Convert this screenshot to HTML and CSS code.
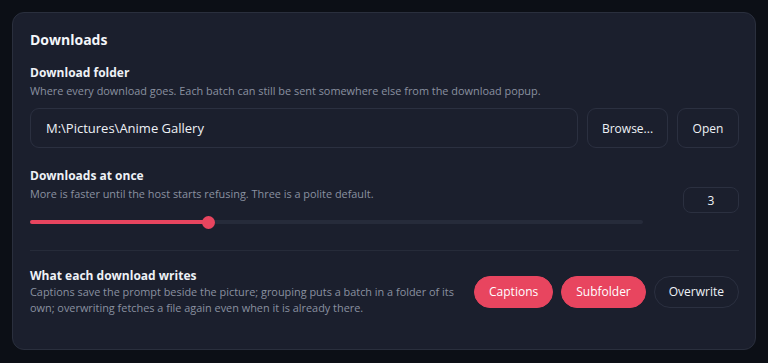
FILE: index.html
```html
<!DOCTYPE html>
<html>
<head>
<meta charset="utf-8">
<link rel="stylesheet" href="styles.css">
</head>
<body>
<section class="card">
  <h2 class="title">Downloads</h2>

  <div class="field">
    <div class="label">Download folder</div>
    <div class="desc">Where every download goes. Each batch can still be sent somewhere else from the download popup.</div>
    <div class="folder-row">
      <div class="input">M:\Pictures\Anime Gallery</div>
      <button class="btn">Browse...</button>
      <button class="btn">Open</button>
    </div>
  </div>

  <div class="field at-once">
    <div class="at-once-text">
      <div class="label">Downloads at once</div>
      <div class="desc">More is faster until the host starts refusing. Three is a polite default.</div>
      <div class="slider">
        <div class="fill" style="width: 178px"></div>
        <div class="thumb" style="left: 178px"></div>
      </div>
    </div>
    <div class="num">3</div>
  </div>

  <div class="divider"></div>

  <div class="writes">
    <div class="writes-text">
      <div class="label">What each download writes</div>
      <div class="desc">Captions save the prompt beside the picture; grouping puts a batch in a folder of its own; overwriting fetches a file again even when it is already there.</div>
    </div>
    <div class="pills">
      <button class="pill on">Captions</button>
      <button class="pill on">Subfolder</button>
      <button class="pill">Overwrite</button>
    </div>
  </div>
</section>
</body>
</html>
```

FILE: styles.css
```css
* { box-sizing: border-box; }
html, body { margin: 0; padding: 0; }
body {
  background: #0c0f16;
  font-family: "Open Sans", "Noto Sans", sans-serif;
  color: #eef1f6;
  padding: 12px 12px 0 12px;
  width: 768px;
  height: 363px;
  overflow: hidden;
}
.card {
  width: 744px;
  height: 338px;
  background: #1b1f2d;
  border: 1px solid #2a2f3d;
  border-radius: 12px;
  padding: 17px 16px 0 17px;
}
.title {
  margin: 0;
  font-size: 14px;
  font-weight: 700;
  line-height: 20px;
  color: #f4f6fa;
}
.field { margin-top: 14px; }
.label {
  font-size: 12px;
  font-weight: 700;
  line-height: 17px;
  color: #eef1f6;
}
.desc {
  font-size: 10.9px;
  line-height: 16px;
  color: #8a91a0;
  margin-top: 2px;
}
.folder-row {
  display: flex;
  gap: 9px;
  margin-top: 9px;
}
.input {
  flex: 1;
  height: 40px;
  border: 1px solid #2b3040;
  border-radius: 9px;
  background: #1b1f2d;
  padding: 0 15px;
  display: flex;
  align-items: center;
  font-size: 13px;
  color: #eef1f6;
}
.btn {
  height: 40px;
  background: #1b1f2d;
  border: 1px solid #2b3040;
  border-radius: 9px;
  color: #eef1f6;
  font-family: inherit;
  font-size: 12px;
  padding: 0 12px;
}
.btn:nth-of-type(1) { width: 81px; }
.btn:nth-of-type(2) { width: 62px; }
.at-once {
  display: flex;
  align-items: flex-start;
  gap: 40px;
  margin-top: 19px;
}
.at-once-text { flex: 1; }
.slider {
  position: relative;
  height: 4px;
  background: #262b3a;
  border-radius: 2px;
  margin-top: 18px;
}
.fill {
  position: absolute;
  left: 0; top: 0; bottom: 0;
  background: #e8455f;
  border-radius: 2px;
}
.thumb {
  position: absolute;
  top: 50%;
  width: 13px;
  height: 13px;
  margin: -6.5px 0 0 -6.5px;
  border-radius: 50%;
  background: #e8455f;
}
.num {
  width: 56px;
  height: 26px;
  margin-top: 20px;
  border: 1px solid #2b3040;
  border-radius: 8px;
  background: #1b1f2d;
  display: flex;
  align-items: center;
  justify-content: center;
  font-size: 12px;
}
.divider {
  height: 1px;
  background: #262b39;
  margin-top: 26px;
}
.writes {
  display: flex;
  align-items: center;
  gap: 12px;
  margin-top: 16px;
}
.writes-text { flex: 1; }
.writes .desc { margin-top: 0; }
.pills { display: flex; gap: 8px; }
.pill {
  height: 32px;
  border-radius: 16px;
  border: 1px solid #2b3040;
  background: #1b1f2d;
  color: #eef1f6;
  font-family: inherit;
  font-size: 12px;
  padding: 0 14px;
}
.pill.on {
  background: #e8455f;
  border-color: #e8455f;
  color: #fff;
}
```
